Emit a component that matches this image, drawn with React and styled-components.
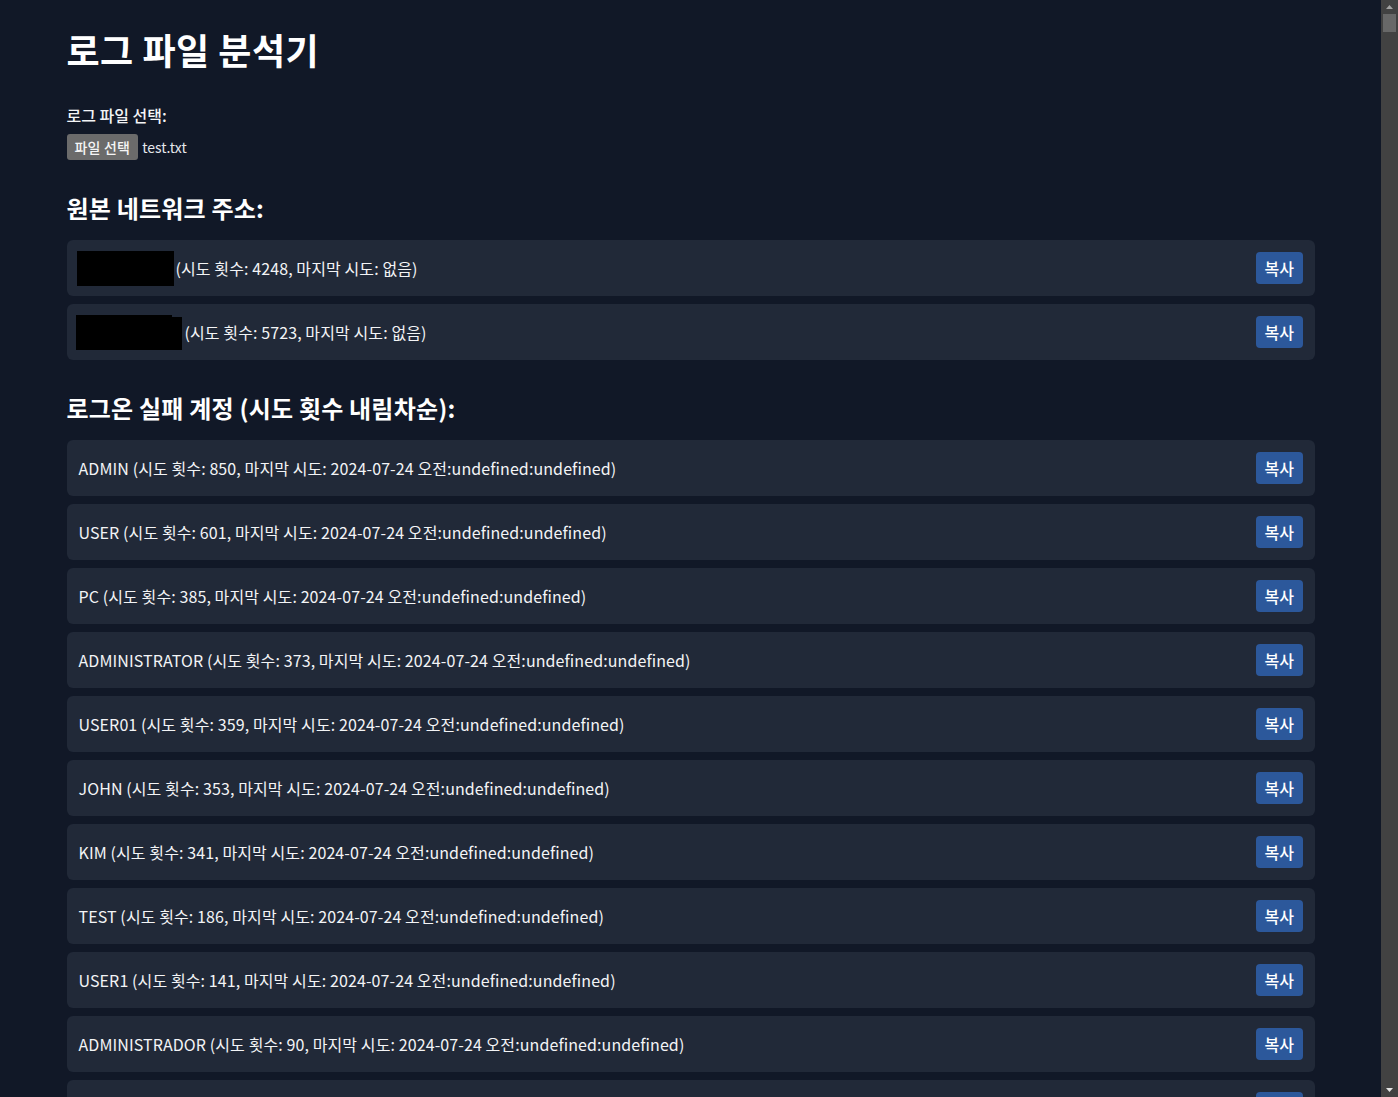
import styled, { createGlobalStyle } from "styled-components";

const networks = [
  { blocks: [{ w: 97, h: 35 }], count: 4248, gap: 2 },
  { blocks: [{ w: 96, h: 35 }, { w: 10, h: 33 }], count: 5723, gap: 3 },
];

const accounts = [
  ["ADMIN", 850],
  ["USER", 601],
  ["PC", 385],
  ["ADMINISTRATOR", 373],
  ["USER01", 359],
  ["JOHN", 353],
  ["KIM", 341],
  ["TEST", 186],
  ["USER1", 141],
  ["ADMINISTRADOR", 90],
  ["SERVER", 88],
  ["GUEST", 74],
  ["ADMIN1", 61],
];

export default function App() {
  return (
    <>
      <GlobalStyle />
      <Page>
        <Title>로그 파일 분석기</Title>

        <Label>로그 파일 선택:</Label>
        <FilePicker>
          <FileButton>파일 선택</FileButton>
          <FileName>test.txt</FileName>
        </FilePicker>

        <SectionTitle>원본 네트워크 주소:</SectionTitle>
        <List>
          {networks.map((n, i) => (
            <Row key={i}>
              <RowText>
                <Redacted $shift={i === 1 ? 3 : 2}>
                  {n.blocks.map((b, j) => (
                    <Block key={j} $w={b.w} $h={b.h} />
                  ))}
                </Redacted>
                <Gap $w={n.gap} />
                (시도 횟수: {n.count}, 마지막 시도: 없음)
              </RowText>
              <CopyButton>복사</CopyButton>
            </Row>
          ))}
        </List>

        <SectionTitle>로그온 실패 계정 (시도 횟수 내림차순):</SectionTitle>
        <List>
          {accounts.map(([name, count]) => (
            <Row key={name}>
              <RowText>
                {name} (시도 횟수: {count}, 마지막 시도: 2024-07-24 오전:undefined:undefined)
              </RowText>
              <CopyButton>복사</CopyButton>
            </Row>
          ))}
        </List>
      </Page>

      {/* browser scrollbar */}
      <ScrollRail>
        <Arrow>
          <svg width="7" height="4" viewBox="0 0 7 4">
            <path d="M0 4 L3.5 0 L7 4 Z" fill="#a3a3a3" />
          </svg>
        </Arrow>
        <Thumb />
        <Track />
        <Arrow>
          <svg width="7" height="4" viewBox="0 0 7 4">
            <path d="M0 0 L7 0 L3.5 4 Z" fill="#e5e5e5" />
          </svg>
        </Arrow>
      </ScrollRail>
    </>
  );
}

/* ------------------- styles ------------------- */
const GlobalStyle = createGlobalStyle`
    html, body {
        margin: 0;
        padding: 0;
        background-color: #111827;
    }

    body {
        padding-right: 17px;
        font-family: "Noto Sans CJK KR", "Noto Sans", sans-serif;
        color: #f3f4f6;
    }
`;

const Page = styled.main`
    max-width: 1280px;
    margin: 0 auto;
    padding: 25px 16px 40px;
    box-sizing: border-box;
`;

const Title = styled.h1`
    margin: 0 0 30px;
    font-size: 36px;
    line-height: 48px;
    font-weight: 700;
    letter-spacing: 0.5px;
    color: #ffffff;
`;

const Label = styled.div`
    font-size: 16px;
    line-height: 24px;
    font-weight: 500;
    color: #f3f4f6;
    margin-bottom: 7px;
`;

const FilePicker = styled.div`
    display: flex;
    align-items: center;
    gap: 4px;
    height: 26px;
`;

const FileButton = styled.span`
    display: inline-flex;
    align-items: center;
    height: 26px;
    padding: 0 8px;
    border-radius: 3px;
    background-color: #6b6b6b;
    color: #f5f5f5;
    font-size: 14px;
    font-weight: 500;
    letter-spacing: 0.2px;
`;

const FileName = styled.span`
    font-size: 14px;
    color: #e5e7eb;
`;

const SectionTitle = styled.h2`
    margin: 32px 0 16px;
    font-size: 24px;
    line-height: 32px;
    font-weight: 700;
    letter-spacing: 0.2px;
    color: #ffffff;
`;

const List = styled.div`
    display: flex;
    flex-direction: column;
    gap: 8px;
`;

const Row = styled.div`
    display: flex;
    align-items: center;
    justify-content: space-between;
    height: 56px;
    padding: 0 12px;
    box-sizing: border-box;
    border-radius: 6px;
    background-color: #212938;
`;

const RowText = styled.span`
    display: flex;
    align-items: center;
    font-size: 16px;
    letter-spacing: 0.1px;
    color: #f3f4f6;
    white-space: pre;
`;

const Redacted = styled.span`
    display: inline-flex;
    align-items: flex-end;
    height: 32px;
    margin-left: -${(p) => p.$shift}px;
`;

const Block = styled.span`
    display: inline-block;
    width: ${(p) => p.$w}px;
    height: ${(p) => p.$h}px;
    margin-bottom: -2px;
    background-color: #000000;
`;

const Gap = styled.span`
    display: inline-block;
    width: ${(p) => p.$w}px;
`;

const CopyButton = styled.button`
    height: 32px;
    padding: 0 8.5px;
    border: none;
    border-radius: 4px;
    background-color: #2c589b;
    color: #ffffff;
    font-family: inherit;
    font-size: 16px;
    font-weight: 500;
    cursor: pointer;
`;

const ScrollRail = styled.aside`
    position: fixed;
    top: 0;
    right: 0;
    bottom: 0;
    width: 17px;
    display: flex;
    flex-direction: column;
    background-color: #424242;
`;

const Arrow = styled.div`
    height: 14px;
    display: flex;
    align-items: center;
    justify-content: center;
    flex-shrink: 0;
`;

const Thumb = styled.div`
    height: 18px;
    margin: 0 2px;
    background-color: #686868;
    flex-shrink: 0;
`;

const Track = styled.div`
    flex: 1;
`;
